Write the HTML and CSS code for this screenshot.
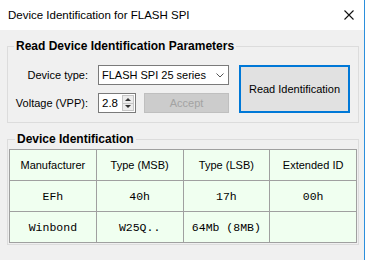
FILE: index.html
```html
<!DOCTYPE html>
<html lang="en">
<head>
  <meta charset="UTF-8" />
  <title>Device Identification for FLASH SPI</title>
  <link rel="stylesheet" href="styles.css">
</head>
<body>
  <div class="window">
    <div class="titlebar">
      <span class="title">Device Identification for FLASH SPI</span>
      <svg class="close" width="10" height="10" viewBox="0 0 10 10">
        <path d="M0.5 0.5 L9.5 9.5 M9.5 0.5 L0.5 9.5" stroke="#111" stroke-width="1.1" fill="none"/>
      </svg>
    </div>

    <div class="client">
      <fieldset class="group">
        <legend>Read Device Identification Parameters</legend>
        <div class="param-grid">
          <label class="lbl">Device type:</label>
          <div class="combo">
            <span>FLASH SPI 25 series</span>
            <svg width="8" height="5" viewBox="0 0 8 5">
              <path d="M0.5 0.5 L4 4 L7.5 0.5" stroke="#555" stroke-width="1" fill="none"/>
            </svg>
          </div>
          <button class="read-btn">Read Identification</button>

          <label class="lbl">Voltage (VPP):</label>
          <div class="volt-row">
            <div class="spin">
              <span class="spin-val">2.8</span>
              <div class="spin-btns">
                <span class="arrow up"></span>
                <span class="arrow down"></span>
              </div>
            </div>
            <button class="accept" disabled>Accept</button>
          </div>
        </div>
      </fieldset>

      <fieldset class="group ident">
        <legend>Device Identification</legend>
        <table class="id-table">
          <tr>
            <th>Manufacturer</th>
            <th>Type (MSB)</th>
            <th>Type (LSB)</th>
            <th>Extended ID</th>
          </tr>
          <tr>
            <td>EFh</td>
            <td>40h</td>
            <td>17h</td>
            <td>00h</td>
          </tr>
          <tr>
            <td>Winbond</td>
            <td>W25Q..</td>
            <td>64Mb (8MB)</td>
            <td></td>
          </tr>
        </table>
      </fieldset>
    </div>
  </div>
</body>
</html>
```

FILE: styles.css
```css
body {
  margin: 0;
  font-family: "Liberation Sans", Arial, sans-serif;
  font-size: 11px;
  color: #000;
  background: #f0f0f0;
}

.window {
  width: 364px;
  height: 260px;
  border-right: 1px solid #2b8fdc;
  background: #f0f0f0;
}

.titlebar {
  height: 30px;
  background: #fff;
  display: flex;
  align-items: center;
  justify-content: space-between;
  padding: 0 10px 0 8px;
}

.title {
  font-size: 11.5px;
}

.client {
  padding: 0 5px 0 7px;
}

.group {
  margin: 9px 0 0 0;
  padding: 0;
  border: 1px solid #dcdcdc;
  min-width: 0;
}

.group legend {
  margin-left: 6px;
  padding: 0 2px;
  font-weight: bold;
  font-size: 12px;
  line-height: 14px;
}

.param-grid {
  display: grid;
  grid-template-columns: 80px 131px 111px;
  grid-template-rows: 20px 20px;
  column-gap: 10px;
  row-gap: 8px;
  padding: 12px 0 9px 0;
}

.lbl {
  text-align: right;
  align-self: center;
}

.combo {
  background: #fff;
  border: 1px solid #7a7a7a;
  display: flex;
  align-items: center;
  justify-content: space-between;
  padding: 0 4px 0 3px;
}

.read-btn {
  grid-row: 1 / 3;
  grid-column: 3;
  background: #e1e1e1;
  border: 2px solid #0078d7;
  font-family: inherit;
  font-size: 11px;
  color: #000;
  padding: 0;
}

.volt-row {
  display: flex;
  gap: 8px;
}

.spin {
  width: 38px;
  background: #fff;
  border: 1px solid #7a7a7a;
  display: flex;
  align-items: stretch;
  justify-content: space-between;
  box-sizing: border-box;
}

.spin-val {
  align-self: center;
  padding-left: 3px;
  font-size: 11.5px;
}

.spin-btns {
  width: 12px;
  display: flex;
  flex-direction: column;
  margin: 1px 1px 1px 0;
}

.arrow {
  flex: 1;
  background: #ececec;
  border: 1px solid #c6c6c6;
  position: relative;
}

.arrow.down {
  border-top: none;
}

.arrow::after {
  content: "";
  position: absolute;
  left: 2px;
  top: 2px;
  border-left: 3px solid transparent;
  border-right: 3px solid transparent;
}

.arrow.up::after {
  border-bottom: 3px solid #333;
}

.arrow.down::after {
  top: 1px;
  border-top: 3px solid #333;
}

.accept {
  width: 85px;
  background: #cccccc;
  border: 1px solid #bfbfbf;
  color: #a3a3a3;
  font-family: inherit;
  font-size: 11px;
  padding: 0;
}

.ident {
  padding: 0 1px 1px 1px;
}

.id-table {
  margin-top: 3px;
  width: 348px;
  border-collapse: collapse;
  table-layout: fixed;
  background: #f0fff0;
}

.id-table th,
.id-table td {
  border: 1px solid #a0a0a0;
  height: 30px;
  padding: 0;
  text-align: center;
  vertical-align: middle;
}

.id-table th {
  font-weight: normal;
  font-size: 11px;
}

.id-table td {
  font-family: "Liberation Mono", "Courier New", monospace;
  font-size: 11.5px;
}
```
